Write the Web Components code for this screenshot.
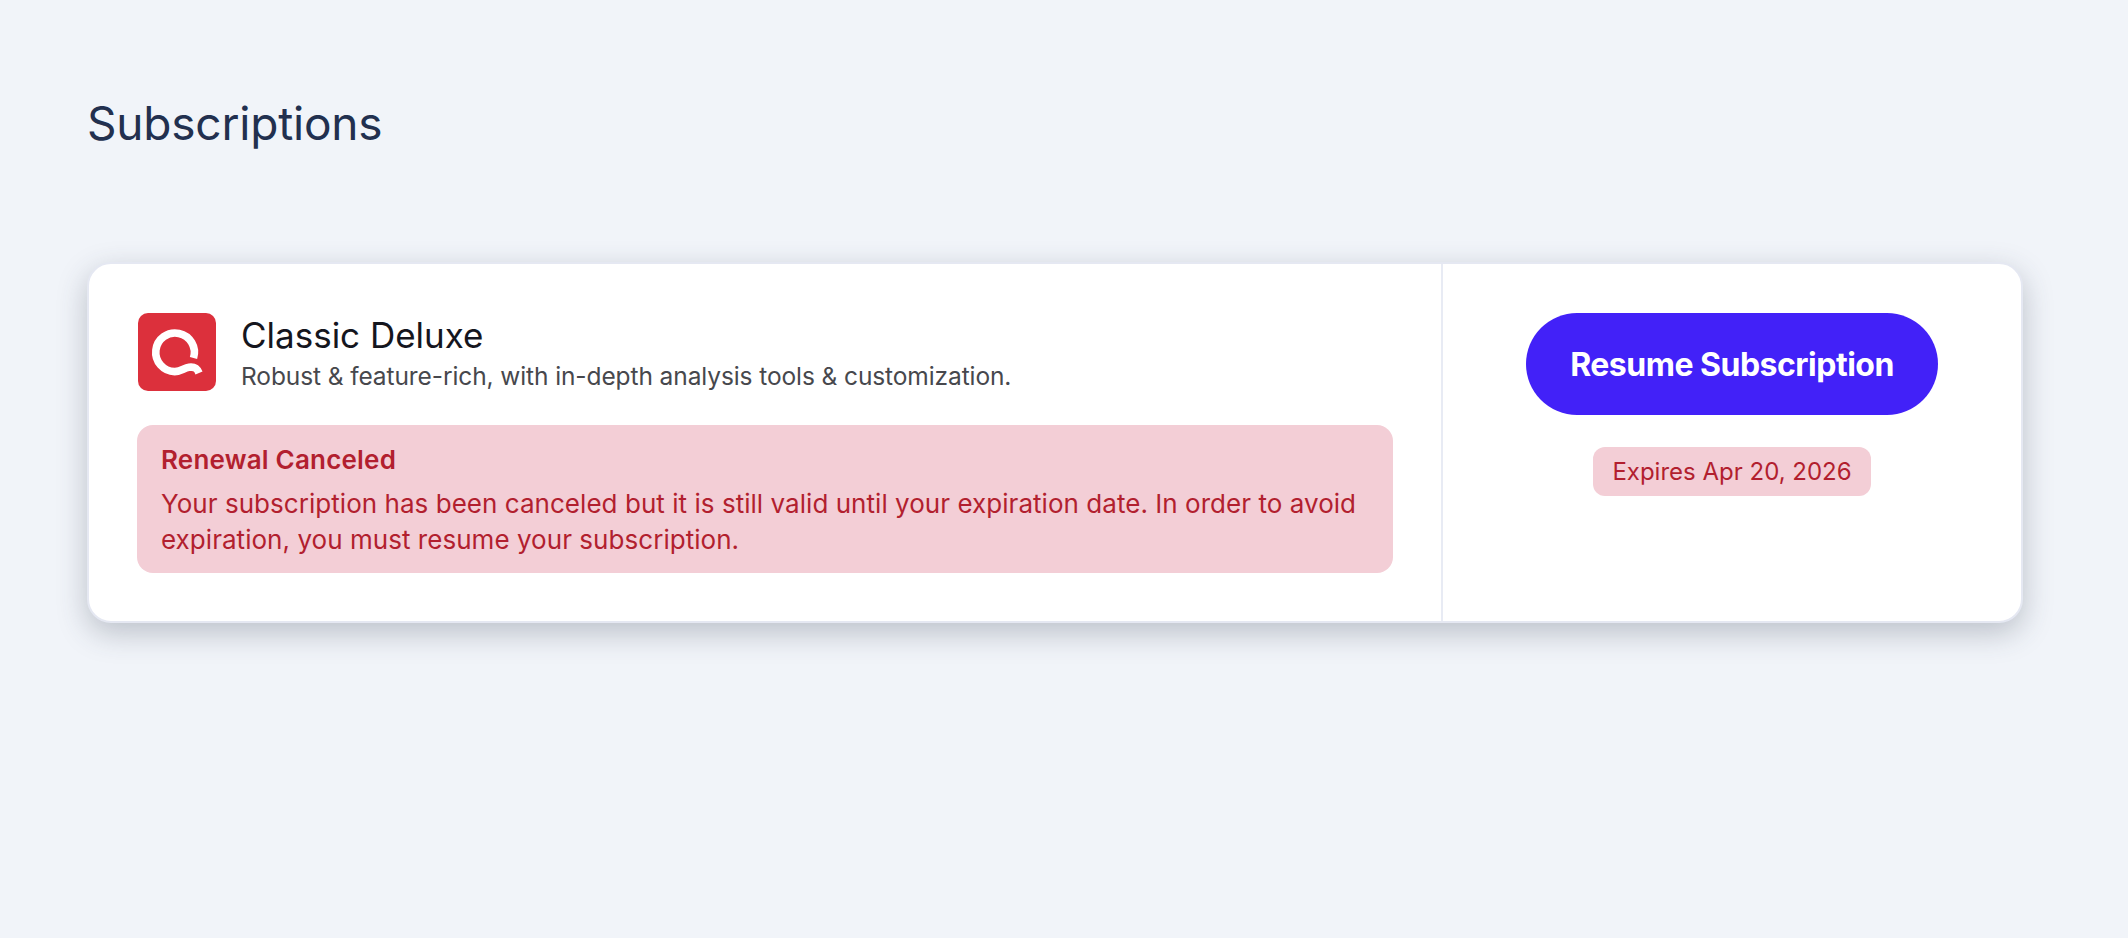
<!DOCTYPE html>
<html lang="en">
<head>
<meta charset="utf-8">
<title>Subscriptions</title>
<style>
    html, body { margin: 0; height: 100%; }
    body {
        background: #f1f4f9;
        font-family: Inter, "Liberation Sans", sans-serif;
    }
</style>
</head>
<body>
<subscriptions-page>
    <subscription-card name="Classic Deluxe" description="Robust &amp; feature-rich, with in-depth analysis tools &amp; customization." expires="Expires Apr 20, 2026">
        <renewal-alert heading="Renewal Canceled">Your subscription has been canceled but it is still valid until your expiration date. In order to avoid expiration, you must resume your subscription.</renewal-alert>
    </subscription-card>
</subscriptions-page>

<script>
class SubscriptionsPage extends HTMLElement {
    constructor() {
        super();
        this.attachShadow({ mode: 'open' });
    }

    connectedCallback() {
        this.shadowRoot.innerHTML = `
            <style>
                :host {
                    display: block;
                    padding: 95px 105px 0 87px;
                }
                h1 {
                    margin: 0 0 111px;
                    font-size: 46px;
                    line-height: 56px;
                    font-weight: 400;
                    letter-spacing: -0.2px;
                    color: #22304f;
                }
            </style>
            <h1>Subscriptions</h1>
            <slot></slot>
        `;
    }
}

class QuoteLogo extends HTMLElement {
    constructor() {
        super();
        this.attachShadow({ mode: 'open' });
    }

    connectedCallback() {
        this.shadowRoot.innerHTML = `
            <style>
                :host {
                    display: block;
                    width: 78px;
                    height: 78px;
                    flex: none;
                }
                svg { display: block; }
            </style>
            <svg width="78" height="78" viewBox="0 0 78 78">
                <rect width="78" height="78" rx="10" fill="#dc303c"/>
                <path d="M55.5 45A19.3 19.3 0 1 0 36.7 58.6C43 58.6 46 55 51 54.3C56 53.6 59 55 61 60"
                      fill="none" stroke="#fff" stroke-width="7.6"/>
            </svg>
        `;
    }
}

class RenewalAlert extends HTMLElement {
    constructor() {
        super();
        this.attachShadow({ mode: 'open' });
    }

    connectedCallback() {
        this.shadowRoot.innerHTML = `
            <style>
                :host {
                    display: block;
                    padding: 18px 24px 15px;
                    border-radius: 16px;
                    background: #f3ced6;
                    color: #b21f2f;
                    font-size: 26px;
                    line-height: 36px;
                    letter-spacing: 0.04px;
                }
                strong {
                    display: block;
                    margin-bottom: 9px;
                    font-size: 26px;
                    line-height: 34px;
                    font-weight: 600;
                    letter-spacing: 0.2px;
                }
            </style>
            <strong>${this.getAttribute('heading')}</strong>
            <slot></slot>
        `;
    }
}

class SubscriptionCard extends HTMLElement {
    constructor() {
        super();
        this.attachShadow({ mode: 'open' });
    }

    connectedCallback() {
        this.shadowRoot.innerHTML = `
            <style>
                :host {
                    display: grid;
                    grid-template-columns: 1fr 580px;
                    height: 361px;
                    box-sizing: border-box;
                    background: #fff;
                    border: 2px solid #e5e8f2;
                    border-radius: 24px;
                    box-shadow: 0 10px 30px rgba(50, 60, 80, 0.28);
                }
                .main { padding: 49px 48px 0 48px; }
                .side {
                    padding-top: 49px;
                    border-left: 2px solid #e8ebf4;
                    display: flex;
                    flex-direction: column;
                    align-items: center;
                    gap: 32px;
                }
                .head {
                    display: flex;
                    align-items: center;
                    gap: 25px;
                    margin: 0 0 34px 1px;
                }
                h2 {
                    margin: 0;
                    font-size: 35px;
                    line-height: 44px;
                    font-weight: 400;
                    color: #15161e;
                }
                p {
                    margin: 4px 0 0;
                    font-size: 24.5px;
                    line-height: 30px;
                    letter-spacing: -0.1px;
                    color: #47484d;
                }
                button {
                    width: 412px;
                    height: 102px;
                    border: 0;
                    border-radius: 51px;
                    background: #4221f8;
                    color: #fff;
                    font: 700 32px Inter, "Liberation Sans", sans-serif;
                    letter-spacing: -0.5px;
                }
                .expires {
                    padding: 0 19.5px;
                    height: 49px;
                    line-height: 49px;
                    border-radius: 12px;
                    background: #f3ced6;
                    color: #b21f2f;
                    font-size: 24px;
                }
            </style>
            <div class="main">
                <div class="head">
                    <quote-logo></quote-logo>
                    <div>
                        <h2>${this.getAttribute('name')}</h2>
                        <p>${this.getAttribute('description')}</p>
                    </div>
                </div>
                <slot></slot>
            </div>
            <div class="side">
                <button type="button">Resume Subscription</button>
                <div class="expires">${this.getAttribute('expires')}</div>
            </div>
        `;
    }
}

customElements.define('subscriptions-page', SubscriptionsPage);
customElements.define('quote-logo', QuoteLogo);
customElements.define('renewal-alert', RenewalAlert);
customElements.define('subscription-card', SubscriptionCard);
</script>
</body>
</html>
